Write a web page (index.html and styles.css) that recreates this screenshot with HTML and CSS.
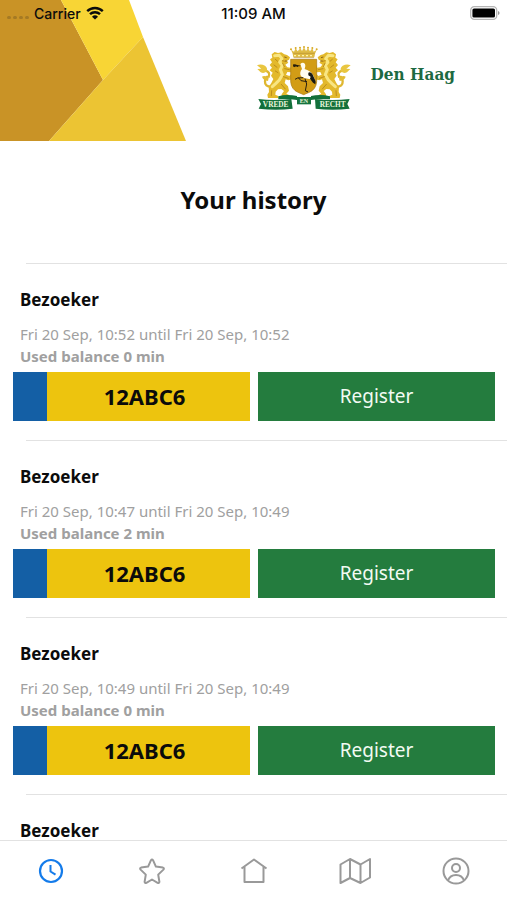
FILE: index.html
```html
<!DOCTYPE html>
<html lang="en">
  <head>
    <meta charset="utf-8" />
    <meta name="viewport" content="width=device-width, initial-scale=1" />
    <title>Your history - Den Haag</title>
    <link rel="stylesheet" href="styles.css">
  </head>

  <body>
    <!-- Phone status bar -->
    <div class="status-bar">
      <div class="status-left">
        <span class="signal"><i></i><i></i><i></i><i></i></span>
        <span>Carrier</span>
        <svg class="wifi" viewBox="0 0 18 14" aria-hidden="true">
          <path d="M1.2 5.2a11.2 11.2 0 0 1 15.6 0M4 8.2a7.2 7.2 0 0 1 10 0" fill="none" stroke="#0b0b0b" stroke-width="2.4" />
          <path d="M9 13.6 6 10.7a4.3 4.3 0 0 1 6 0z" fill="#0b0b0b" />
        </svg>
      </div>
      <div class="status-time">11:09 AM</div>
      <div class="status-right">
        <svg class="battery" viewBox="0 0 30 14" aria-hidden="true">
          <rect x="0.7" y="0.7" width="26" height="12.6" rx="3.6" fill="#fff" stroke="#b5b5b5" stroke-width="1.3" />
          <rect x="2.4" y="2.4" width="22.6" height="9.2" rx="1.6" fill="#000" />
          <path d="M28 5v4q1.6-.6 1.6-2T28 5z" fill="#999" />
        </svg>
      </div>
    </div>

    <main class="content">
      <header class="header">
        <svg class="header-art" viewBox="0 0 187 141" aria-hidden="true">
          <path d="M0 0H61L103 80 49 141H0z" fill="#c99326" />
          <path d="M61 0H129L143 37 103 80z" fill="#f8d535" />
          <path d="M143 37 186 141H49L103 80z" fill="#ecc433" />
        </svg>
        <div class="brand">
          <svg class="crest" viewBox="28 32 288 198" role="img" aria-label="Coat of arms">
            <defs>
              <g id="lion">
                <!-- tail -->
                <path d="M74 154Q54 154 55 138T66 124Q72 110 56 106" fill="none" stroke="#dfb730" stroke-width="7" stroke-linecap="round" />
                <path d="M31 90Q42 84 55 91 64 98 60 108 52 116 42 111L32 101 44 100z" fill="#e9c640" />
                <path d="M66 128q-12-10-20-4 4 11 18 13z" fill="#e3bc35" />
                <!-- body and mane -->
                <path d="M75 57 84 50 94 53 104 51 113 57 121 59 130 66 127 73 120 76 125 82 116 88 122 96 132 97 133 90 142 93 142 104 134 111 122 110 118 118 128 122 134 116 142 121 137 132 125 135 117 132 114 143 124 153 127 166 119 175 127 179 129 188 104 188 105 177 112 167 104 161 94 162 87 169 86 178 95 182 95 188 64 188 62 178 67 170 66 155 74 143 80 131 73 121 78 112 69 105 76 97 69 89 76 81 70 72 77 67z" fill="#e3b92c" />
                <path d="M84 61 98 60 106 70 99 80 107 91 101 103 107 118 98 134 87 145 77 154" fill="none" stroke="#f8e581" stroke-width="9" stroke-linejoin="round" stroke-linecap="round" />
                <path d="M86 72 93 78M82 89 91 96M86 107 94 112M107 76 115 78M114 100 128 103M110 124 125 129M104 147 116 161M75 166 74 181M112 181 121 183M108 84 113 94" fill="none" stroke="#bd8d1c" stroke-width="3" stroke-linecap="round" />
                <path d="M113 65 120 67M115 77 122 77" stroke="#8f6517" stroke-width="3" />
              </g>
            </defs>
            <use href="#lion" />
            <use href="#lion" transform="translate(343 0) scale(-1 1)" />

            <!-- crown -->
            <path d="M138 55 133 43 142 49 147 39 153 48 161 39 166 47 172 36 178 47 184 39 190 48 197 39 201 49 210 43 205 55 203 66H140z" fill="#dfbc45" />
            <path d="M142 61H201" stroke="#fff3ad" stroke-width="4" stroke-dasharray="6 6" />
            <path d="M140 54H204M141 67H202" stroke="#b88e30" stroke-width="2" />
            <g fill="#d8aa24">
              <circle cx="133" cy="42" r="3" /><circle cx="147" cy="38" r="3" /><circle cx="160" cy="37" r="3" /><circle cx="172" cy="35" r="3" />
              <circle cx="184" cy="37" r="3" /><circle cx="197" cy="38" r="3" /><circle cx="210" cy="42" r="3" />
            </g>

            <!-- shield with stork -->
            <path d="M132 72H210V139Q208 162 188 171L171 178 154 171Q134 162 132 139z" fill="#d29c16" stroke="#a87812" stroke-width="2" />
            <path d="M161 86Q169 79 175 86 178 93 174 101 183 104 193 111 203 122 207 139 198 136 190 131 173 132 163 123 157 112 166 101 167 94z" fill="#fffdf0" />
            <path d="M185 112Q192 109 197 116L207 138 206 147 199 142 190 130 192 124 185 120z" fill="#171916" />
            <path d="M162 91 140 86 140 94 159 93" fill="#2b210d" />
            <path d="M139 90q5 8 8-1l7 5" fill="none" stroke="#211b0c" stroke-width="3" />
            <path d="M175 130 180 146 176 166 184 170M170 127 153 128 145 132M155 127 163 136 181 139" fill="none" stroke="#292010" stroke-width="3" />

            <!-- motto ribbon -->
            <path d="M95 183Q119 176 151 182L151 194Q121 189 95 192zM193 182Q222 176 250 183V192Q222 189 193 194z" fill="#13703b" />
            <path d="M151 185H193V207H151z" fill="#16733f" />
            <path d="M35 191Q81 197 134 191L138 220Q89 226 36 220L43 206zM205 191Q258 197 309 191L302 206 309 220Q257 226 207 220z" fill="#13703b" />
            <g fill="#e9f6dc" font-family="Liberation Serif, serif" font-weight="bold" text-anchor="middle">
              <text x="87" y="215" font-size="22">VREDE</text>
              <text x="172" y="203" font-size="18">EN</text>
              <text x="258" y="215" font-size="22">RECHT</text>
            </g>
          </svg>
          <span class="brand-name">Den Haag</span>
        </div>
      </header>

      <h1 class="page-title">Your history</h1>

      <ul class="history">
        <li class="history-item">
          <h2 class="visitor">Bezoeker</h2>
          <p class="period">Fri 20 Sep, 10:52 until Fri 20 Sep, 10:52</p>
          <p class="balance">Used balance 0 min</p>
          <div class="actions">
            <div class="plate">12ABC6</div>
            <button class="register" type="button">Register</button>
          </div>
        </li>
        <li class="history-item">
          <h2 class="visitor">Bezoeker</h2>
          <p class="period">Fri 20 Sep, 10:47 until Fri 20 Sep, 10:49</p>
          <p class="balance">Used balance 2 min</p>
          <div class="actions">
            <div class="plate">12ABC6</div>
            <button class="register" type="button">Register</button>
          </div>
        </li>
        <li class="history-item">
          <h2 class="visitor">Bezoeker</h2>
          <p class="period">Fri 20 Sep, 10:49 until Fri 20 Sep, 10:49</p>
          <p class="balance">Used balance 0 min</p>
          <div class="actions">
            <div class="plate">12ABC6</div>
            <button class="register" type="button">Register</button>
          </div>
        </li>
        <li class="history-item">
          <h2 class="visitor">Bezoeker</h2>
        </li>
      </ul>
    </main>

    <!-- Tabs -->
    <nav class="tab-bar">
      <a class="tab active" href="#history" aria-label="History">
        <svg viewBox="0 0 32 32"><circle cx="16" cy="16" r="11" stroke-width="2.2" /><path d="M15.500 10v6.500l5 3.200" /></svg>
      </a>
      <a class="tab" href="#favorites" aria-label="Favorites">
        <svg viewBox="0 0 32 32"><path d="M15 5.200q1-1.600 2 0l2.900 6.400 7 1q1.700.6.500 2l-5.200 5 1.200 7.300q-.2 1.600-1.800 1L16 24.500l-5.600 3.400q-1.600.6-1.800-1l1.200-7.300-5.200-5q-1.200-1.400.5-2l7-1z" /></svg>
      </a>
      <a class="tab" href="#home" aria-label="Home">
        <svg viewBox="0 0 32 32"><path d="M3.500 13.500 16 4.500l12.500 9M6.500 11.500V27h19V11.500" /></svg>
      </a>
      <a class="tab" href="#map" aria-label="Map">
        <svg viewBox="0 0 32 32"><path d="M1.500 9.500 11 4l10.500 5.500L31 4v18.500L21.500 28 11 23l-9.500 5zM11 4v19M21.500 9.500V28" /></svg>
      </a>
      <a class="tab" href="#account" aria-label="Account">
        <svg viewBox="0 0 32 32"><circle cx="16" cy="16" r="12.500" /><circle cx="16" cy="13" r="4" /><path d="M8 25.500q2-5.500 8-5.500t8 5.500" /></svg>
      </a>
    </nav>
  </body>
</html>
```

FILE: styles.css
```css
* {
  box-sizing: border-box;
}

body {
  display: flex;
  flex-direction: column;
  height: 100vh;
  margin: 0;
  background-color: white;
  color: #0b0b0b;
  font-family: "Noto Sans", sans-serif;
}

/* status bar lies over the header art */
.status-bar {
  position: absolute;
  top: 0;
  left: 0;
  right: 0;
  z-index: 1;
  display: grid;
  grid-template-columns: 1fr auto 1fr;
  align-items: center;
  height: 26px;
  padding: 0 7px;
  font-family: "Liberation Sans", sans-serif;
  font-family: Inter, sans-serif;
  font-size: 14px;
  font-weight: 500;
}

.status-left {
  display: flex;
  align-items: center;
  gap: 5px;
}

.signal {
  display: flex;
  gap: 2px;
  padding-top: 8px;
}

.signal i {
  width: 4px;
  height: 3px;
  border-radius: 2px;
  background-color: #a57a24;
}

.wifi {
  width: 18px;
  height: 14px;
}

.status-time {
  font-size: 15px;
}

.status-right {
  display: flex;
  justify-content: flex-end;
}

.battery {
  width: 30px;
  height: 14px;
}

.content {
  flex: 1;
  min-height: 0;
  overflow-y: auto;
  scrollbar-width: none;
}

.header {
  display: flex;
  justify-content: space-between;
  padding-right: 52px;
}

.header-art {
  flex: none;
  width: 187px;
  height: 141px;
}

.brand {
  display: flex;
  align-items: center;
  gap: 19px;
  height: 66px;
  margin-top: 46px;
}

.crest {
  width: 96px;
  height: 66px;
}

.brand-name {
  padding-bottom: 10px;
  color: #1d6a42;
  font-family: "DejaVu Serif Condensed", "DejaVu Serif", serif;
  font-size: 17px;
  font-weight: bold;
}

.page-title {
  margin: 39px 0 43px;
  font-size: 24px;
  line-height: 40px;
  text-align: center;
}

.history {
  margin: 0;
  padding: 0;
  list-style: none;
}

.history-item {
  padding-bottom: 19px;
}

.history-item::before {
  content: "";
  display: block;
  height: 1px;
  margin-left: 26px;
  background-color: #e2e2e2;
}

.visitor {
  margin: 24px 20px 11px;
  font-size: 17px;
  line-height: 24px;
}

.period,
.balance {
  margin: 0 20px;
  color: #a0a0a0;
  font-size: 15px;
  line-height: 22px;
}

.balance {
  font-weight: bold;
}

.actions {
  display: grid;
  grid-template-columns: 1fr 1fr;
  gap: 8px;
  margin-top: 5px;
  padding: 0 12px 0 13px;
}

.plate,
.register {
  height: 49px;
  line-height: 49px;
  text-align: center;
}

.plate {
  border-left: 34px solid #145fa5;
  padding-right: 8px;
  background-color: #edc40e;
  font-size: 22px;
  font-weight: bold;
}

.register {
  border: 0;
  padding: 0;
  background-color: #247c3e;
  color: #f3fbf3;
  font-family: inherit;
  font-size: 19px;
}

.tab-bar {
  display: flex;
  flex: none;
  height: 60px;
  border-top: 1px solid #e2e2e2;
  background-color: white;
}

.tab {
  display: flex;
  flex: 1;
  align-items: center;
  justify-content: center;
  color: #999;
}

.tab svg {
  width: 32px;
  height: 32px;
  fill: none;
  stroke: currentColor;
  stroke-width: 2;
  stroke-linejoin: round;
}

.tab.active {
  color: #147bea;
}
```
